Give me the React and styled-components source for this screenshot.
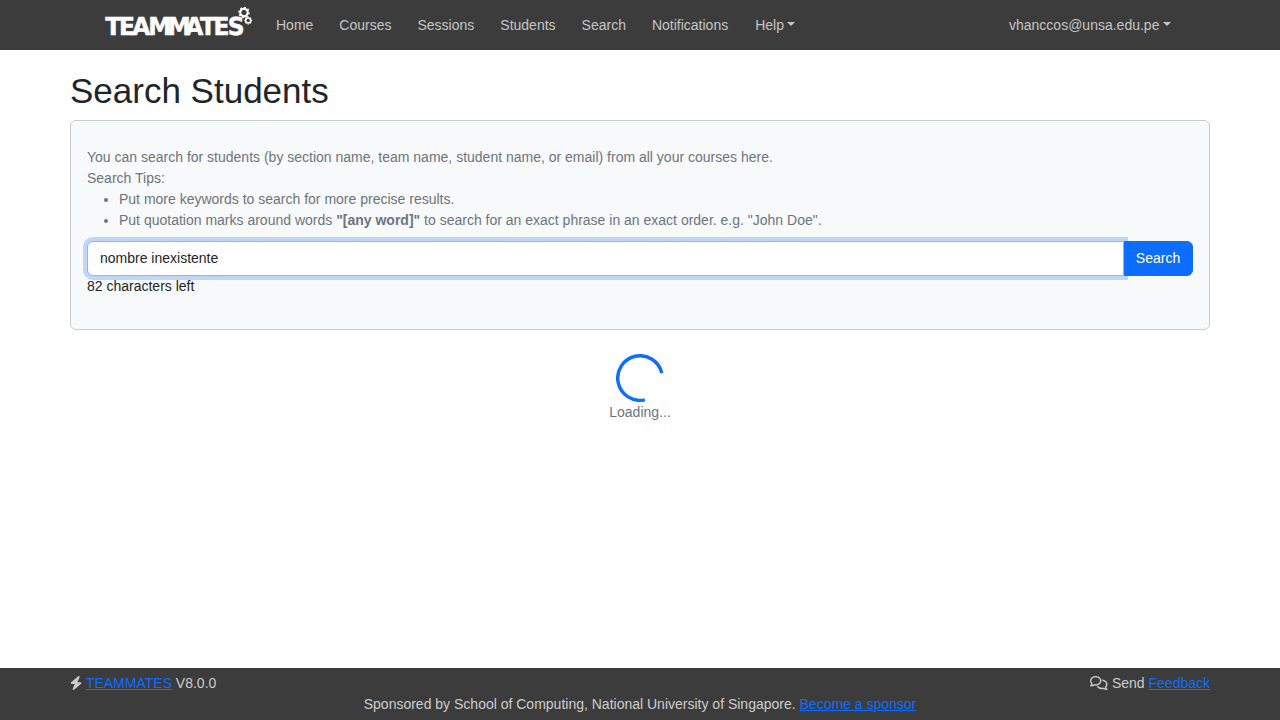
import React from "react";
import styled, { createGlobalStyle } from "styled-components";
import { FaBolt, FaRegComments } from "react-icons/fa6";

const GlobalStyle = createGlobalStyle`
  *, *::before, *::after { box-sizing: border-box; }
  html { font-size: 14px; }
  body {
    margin: 0;
    font-family: "Liberation Sans", Arial, sans-serif;
    font-size: 14px;
    line-height: 21px;
    color: #212529;
    background: #fff;
  }
`;

const Page = styled.div`
  display: flex;
  flex-direction: column;
  height: 100vh;
`;

const NavBar = styled.nav`
  height: 50px;
  flex: none;
  background: #3c3c3c;
`;

const NavInner = styled.div`
  display: flex;
  align-items: center;
  height: 50px;
  margin: 0 109px 0 105px;
`;

const Logo = styled.svg`
  display: block;
  width: 148px;
  height: 40px;
  margin-right: 23px;
  margin-top: -2px;
  overflow: visible;
`;

const NavLinks = styled.div`
  display: flex;
  gap: 26px;
  flex: 1;
`;

const NavLink = styled.a`
  color: #c5c5c5;
  text-decoration: none;
  white-space: nowrap;
  margin-left: ${(p) => p.$shift || 0}px;
`;

const Caret = styled.span`
  display: inline-block;
  margin-left: ${(p) => p.$gap || 3}px;
  vertical-align: 3.57px;
  border-top: 4.2px solid;
  border-right: 4.2px solid transparent;
  border-left: 4.2px solid transparent;
`;

const Main = styled.main`
  flex: 1;
  width: 1140px;
  margin: 0 auto;
  padding-top: 20px;
`;

const Title = styled.h1`
  margin: 0 0 8px;
  font-size: 35px;
  line-height: 42px;
  font-weight: 400;
`;

const Card = styled.section`
  height: 210px;
  padding: 26px 16px 0;
  border: 1px solid #c8cbcd;
  border-radius: 6px;
  background: #f8f9fa;
`;

const HelpText = styled.div`
  color: #6c757d;
`;

const Tips = styled.ul`
  margin: 0 0 10px;
  padding-left: 32px;
`;

const InputGroup = styled.div`
  display: flex;
  height: 35px;
`;

const SearchInput = styled.input`
  flex: 1;
  min-width: 0;
  padding: 0 12px;
  border: 1px solid #86b7fe;
  border-radius: 6px 0 0 6px;
  outline: 0;
  box-shadow: 0 0 0 4px rgba(13, 110, 253, 0.25);
  background: #fff;
  color: #212529;
  font: inherit;
`;

const SearchButton = styled.button`
  width: 69px;
  padding: 0 1px 0 0;
  border: 1px solid #0d6efd;
  border-radius: 0 6px 6px 0;
  background: #0d6efd;
  color: #fff;
  font: inherit;
`;

const Loading = styled.div`
  display: flex;
  flex-direction: column;
  align-items: center;
  margin-top: 24px;
  color: #6c757d;
`;

const Spinner = styled.svg`
  display: block;
  width: 48px;
  height: 48px;
`;

const Footer = styled.footer`
  flex: none;
  height: 52px;
  padding: 5px 70px 0;
  background: #3c3c3c;
  color: #ccc;
`;

const FooterRow = styled.div`
  display: flex;
  justify-content: ${(p) => (p.$center ? "center" : "space-between")};
`;

const BoltIcon = styled(FaBolt)`
  width: 12.25px;
  height: 14px;
  vertical-align: -1.75px;
`;

const CommentsIcon = styled(FaRegComments)`
  width: 17.5px;
  height: 14px;
  margin-right: 0.5px;
  vertical-align: -1.75px;
  stroke-width: 4px;
`;

const FooterLink = styled.a`
  color: #0d6efd;
  text-decoration: underline;
`;

const teeth = [0, 45, 90, 135, 180, 225, 270, 315];

function Gear({ x, y, r, width, turn }) {
  return (
    <g transform={`translate(${x} ${y}) rotate(${turn})`} stroke="#fff" fill="none">
      <circle r={r} strokeWidth={width} />
      {teeth.map((a) => (
        <path
          key={a}
          transform={`rotate(${a})`}
          d={`M0 ${-r - width * 0.3}V${-r - width * 0.95}`}
          strokeWidth={width}
        />
      ))}
    </g>
  );
}

// Left edge of each wordmark letter, in logo pixels.
const letterX = [0.2, 14.1, 27.4, 43.2, 62.4, 80.3, 94.9, 108.6, 122.6]
  .map((x) => (x / 0.95).toFixed(1))
  .join(" ");

function TeammatesLogo() {
  return (
    <Logo viewBox="0 0 148 40" aria-label="TEAMMATES">
      <text
        transform="scale(0.95 1)"
        x={letterX}
        y="31.4"
        fill="#fff"
        stroke="#fff"
        strokeWidth="0.5"
        textRendering="geometricPrecision"
        fontFamily="'DejaVu Sans', sans-serif"
        fontWeight="700"
        fontSize="24.6"
      >
        TEAMMATES
      </text>
      <Gear x={139} y={8.5} r={3.7} width={2.1} turn={10} />
      <Gear x={143.2} y={16.5} r={2.5} width={1.5} turn={0} />
    </Logo>
  );
}

const links = ["Home", "Courses", "Sessions", "Students", "Search", "Notifications"];

export default function App() {
  return (
    <Page>
      <GlobalStyle />
      <NavBar>
        <NavInner>
          <TeammatesLogo />
          <NavLinks>
            {links.map((l) => (
              <NavLink key={l}>{l}</NavLink>
            ))}
            <NavLink $shift={1}>Help<Caret /></NavLink>
          </NavLinks>
          <NavLink>vhanccos@unsa.edu.pe<Caret $gap={3.57} /></NavLink>
        </NavInner>
      </NavBar>
      <Main>
        <Title>Search Students</Title>
        <Card>
          <HelpText>
            <div>You can search for students (by section name, team name, student name, or email) from all your courses here.</div>
            <div>Search Tips:</div>
            <Tips>
              <li>Put more keywords to search for more precise results.</li>
              <li>
                Put quotation marks around words <b>"[any word]"</b> to search for an exact phrase in an exact order. e.g. "John Doe".
              </li>
            </Tips>
          </HelpText>
          <InputGroup>
            <SearchInput defaultValue="nombre inexistente" />
            <SearchButton>Search</SearchButton>
          </InputGroup>
          <div>82 characters left</div>
        </Card>
        <Loading>
          <Spinner viewBox="0 0 48 48">
            <path d="M45.8 19.2A22.3 22.3 0 1 0 28.9 45.8" fill="none" stroke="#0d6efd" strokeWidth="3.4" />
          </Spinner>
          <div>Loading...</div>
        </Loading>
      </Main>
      <Footer>
        <FooterRow>
          <div><BoltIcon /> <FooterLink>TEAMMATES</FooterLink> V8.0.0</div>
          <div><CommentsIcon /> Send <FooterLink>Feedback</FooterLink></div>
        </FooterRow>
        <FooterRow $center>
          <div>Sponsored by School of Computing, National University of Singapore. <FooterLink>Become a sponsor</FooterLink></div>
        </FooterRow>
      </Footer>
    </Page>
  );
}
